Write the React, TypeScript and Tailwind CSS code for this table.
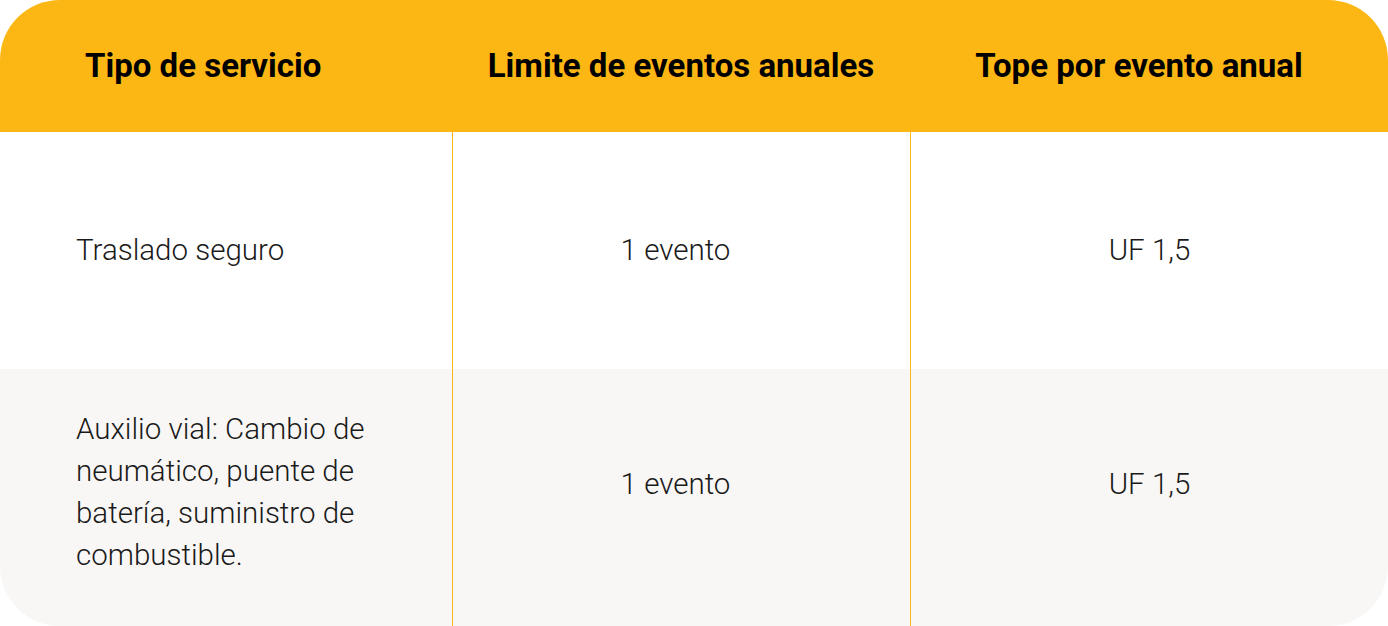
const rows = [
  { service: "Traslado seguro", limit: "1 evento", cap: "UF 1,5" },
  {
    service: "Auxilio vial: Cambio de neumático, puente de batería, suministro de combustible.",
    limit: "1 evento",
    cap: "UF 1,5",
  },
];

export default function App() {
  return (
    <div className="w-[1388px] h-[626px] overflow-hidden bg-white font-['Roboto',sans-serif] text-[#1a1a1a]">
      <div className="rounded-[60px] overflow-hidden">
        {/* header */}
        <div className="grid grid-cols-[452px_458px_1fr] h-[132px] bg-[#FDB714] text-[33px] font-bold text-black">
          <div className="flex items-center pl-[85px]">Tipo de servicio</div>
          <div className="flex items-center justify-center">Limite de eventos anuales</div>
          <div className="flex items-center justify-center pr-[20px]">Tope por evento anual</div>
        </div>

        {/* first row */}
        <div className="grid grid-cols-[452px_458px_1fr] h-[237px] bg-white text-[29.5px] font-light">
          <div className="flex items-center pl-[76px]">{rows[0].service}</div>
          <div className="flex items-center justify-center pr-[12px] border-l border-[#FDB714]">{rows[0].limit}</div>
          <div className="flex items-center justify-center border-l border-[#FDB714]">{rows[0].cap}</div>
        </div>

        {/* second row */}
        <div className="grid grid-cols-[452px_458px_1fr] h-[257px] bg-[#F8F7F5] text-[29.5px] font-light">
          <div className="pl-[76px] pr-[66px] pt-[39px] leading-[42px]">{rows[1].service}</div>
          <div className="flex justify-center pt-[93px] pr-[12px] border-l border-[#FDB714]">{rows[1].limit}</div>
          <div className="flex justify-center pt-[93px] border-l border-[#FDB714]">{rows[1].cap}</div>
        </div>
      </div>
    </div>
  );
}
